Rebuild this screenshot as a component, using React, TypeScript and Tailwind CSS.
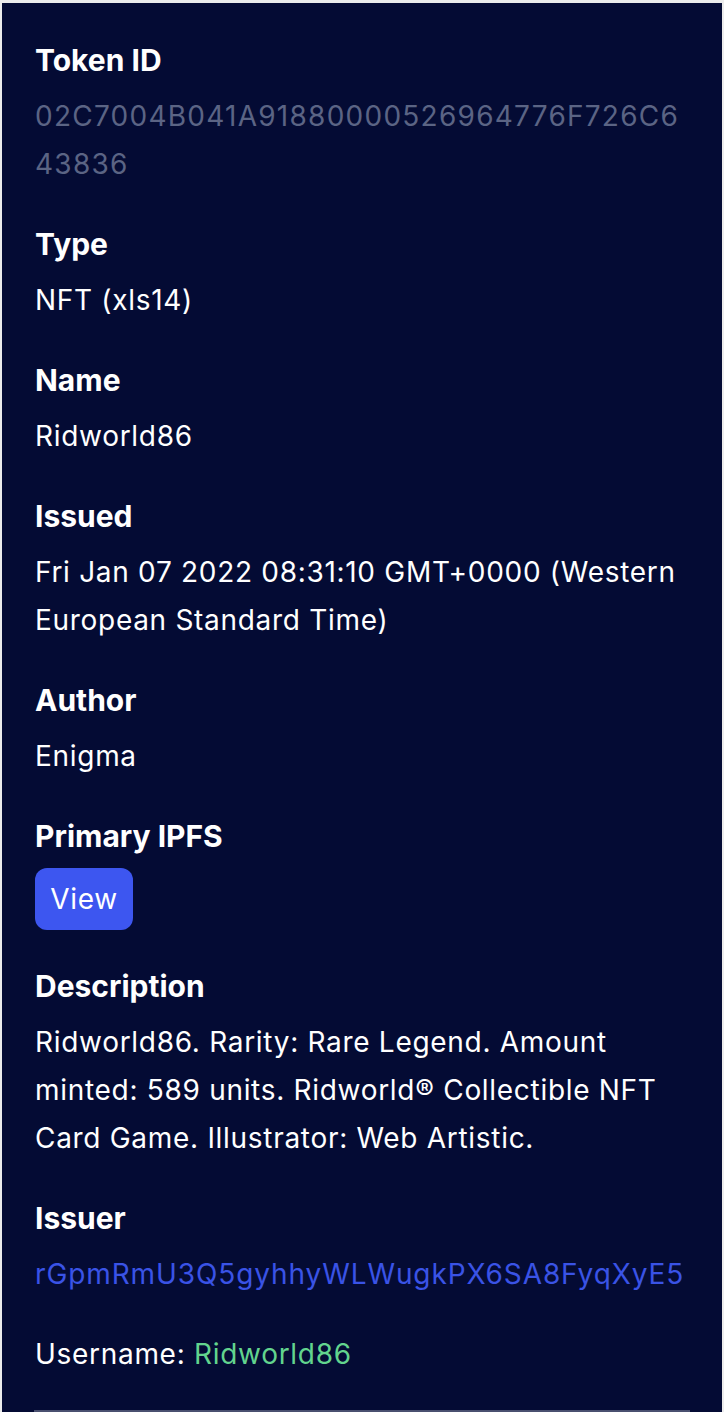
import React from "react";

const font = { fontFamily: "Inter, 'Liberation Sans', sans-serif" };

function Label({ children }: { children: React.ReactNode }) {
  return <div className="text-[30px] leading-[36px] font-bold text-white">{children}</div>;
}

function Lines({ lines, className }: { lines: string[]; className: string }) {
  return (
    <div className={"mt-[14px] text-[28px] leading-[48px] " + className}>
      {lines.map((l, i) => (
        <div key={i} className="whitespace-nowrap">{l}</div>
      ))}
    </div>
  );
}

export default function App() {
  return (
    <div className="min-h-[1412px] bg-[#ececec] pt-[3px] pl-[2px] pr-[2px]" style={font}>
      <div className="bg-[#040b34] min-h-[1450px] pt-[39px] px-[33px]">
        <Label>Token ID</Label>
        <Lines
          className="text-[#5b6484] tracking-[1.25px]"
          lines={["02C7004B041A91880000526964776F726C6", "43836"]}
        />

        <div className="mt-[38px]">
          <Label>Type</Label>
          <Lines className="text-white tracking-[0.7px]" lines={["NFT (xls14)"]} />
        </div>

        <div className="mt-[38px]">
          <Label>Name</Label>
          <Lines className="text-white tracking-[0.7px]" lines={["Ridworld86"]} />
        </div>

        <div className="mt-[38px]">
          <Label>Issued</Label>
          <Lines
            className="text-white tracking-[0.7px]"
            lines={["Fri Jan 07 2022 08:31:10 GMT+0000 (Western", "European Standard Time)"]}
          />
        </div>

        <div className="mt-[38px]">
          <Label>Author</Label>
          <Lines className="text-white tracking-[0.7px]" lines={["Enigma"]} />
        </div>

        <div className="mt-[38px]">
          <Label>Primary IPFS</Label>
          <button className="mt-[14px] h-[62px] w-[98px] rounded-[12px] bg-[#3d56f0] text-[28px] tracking-[0.7px] text-white">
            View
          </button>
        </div>

        <div className="mt-[38px]">
          <Label>Description</Label>
          <Lines
            className="text-white tracking-[0.7px]"
            lines={[
              "Ridworld86. Rarity: Rare Legend. Amount",
              "minted: 589 units. Ridworld® Collectible NFT",
              "Card Game. Illustrator: Web Artistic.",
            ]}
          />
        </div>

        <div className="mt-[38px]">
          <Label>Issuer</Label>
          <Lines className="text-[#3a53e6] tracking-[0.9px]" lines={["rGpmRmU3Q5gyhhyWLWugkPX6SA8FyqXyE5"]} />
        </div>

        <div className="mt-[32px] text-[28px] leading-[48px] text-white tracking-[0.7px]">
          Username: <span className="text-[#62d48e]">Ridworld86</span>
        </div>

        <div className="mt-[32px] ml-[-1px] mr-[-1px] h-[2px] bg-[#4a5070]" />
      </div>
    </div>
  );
}
